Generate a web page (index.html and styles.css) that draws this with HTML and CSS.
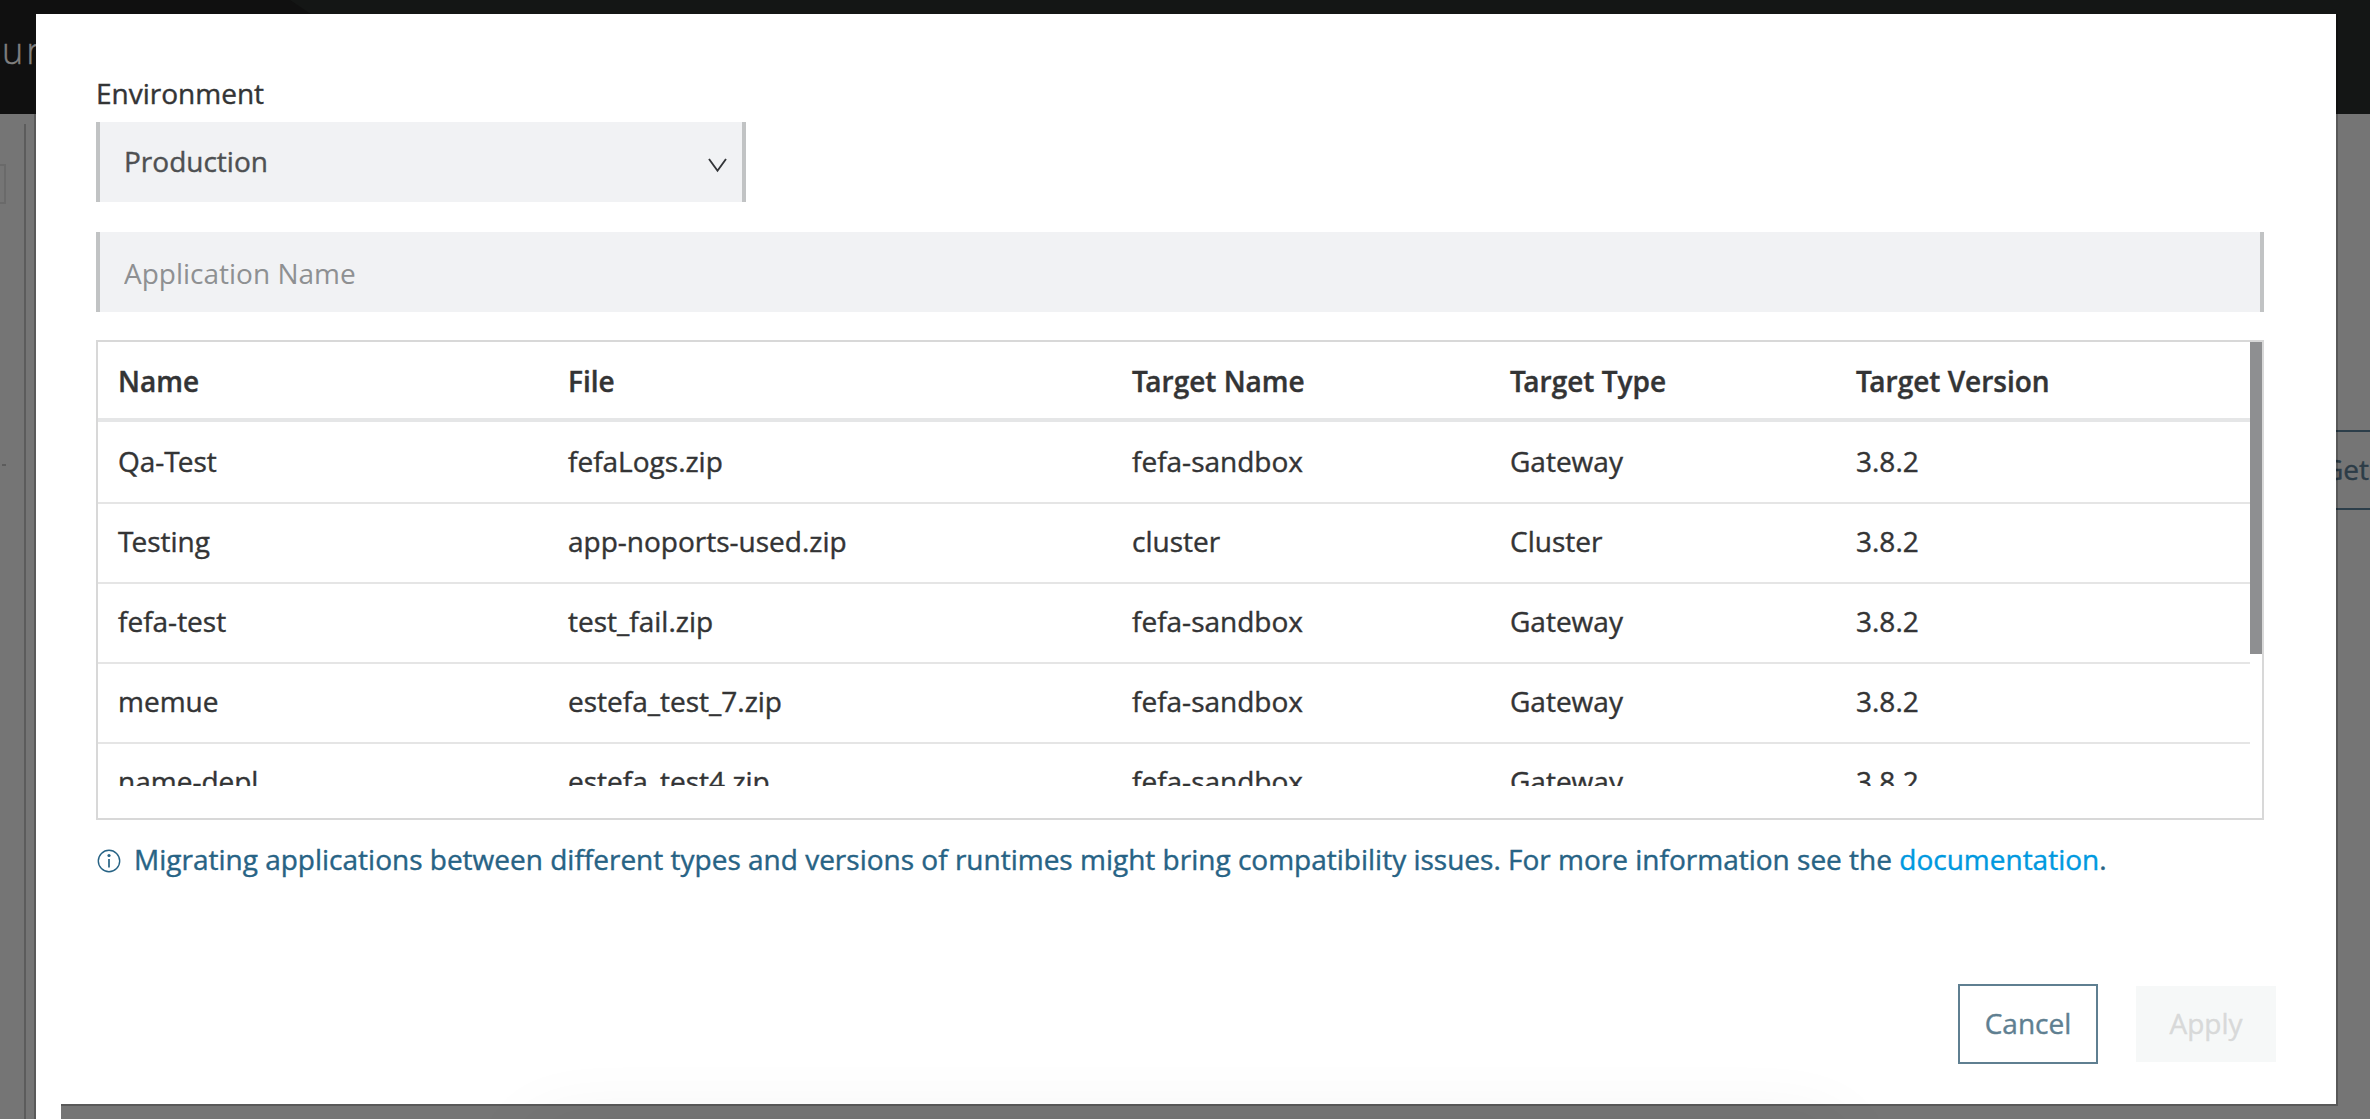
FILE: index.html
```html
<!DOCTYPE html>
<html lang="en">
<head>
<meta charset="utf-8">
<title>Runtime Manager</title>
<link rel="stylesheet" href="styles.css">
</head>
<body>
<div class="page">
  <header class="topbar">
    <svg class="topbar-shape" width="2080" height="114" viewBox="0 0 2080 114"><path d="M0 0H2080V114H170Z" fill="#141615"/></svg>
    <span class="topbar-title">ur</span>
  </header>
  <div class="page-line"></div>
  <div class="page-box"></div>
  <div class="page-dash"></div>
  <div class="page-button">Get</div>
</div>
<div class="under-panel"></div>
<main class="modal">
  <label class="label">Environment</label>
  <div class="field select">
    <span>Production</span>
    <svg width="20" height="16" viewBox="0 0 20 16"><path d="M2 2L10.500 13.700L19 2" fill="none" stroke="#333538" stroke-width="1.900"/></svg>
  </div>
  <input class="field input" type="text" placeholder="Application Name">
  <section class="table">
    <div class="rows">
      <div class="row head"><span>Name</span><span>File</span><span class="kern">Target Name</span><span class="kern">Target Type</span><span class="kern">Target Version</span></div>
      <div class="row first"><span>Qa-<b class="pair">T</b>est</span><span>fefaLogs.zip</span><span>fefa-sandbox</span><span>Gateway</span><span>3.8.2</span></div>
      <div class="row"><span><b class="pair">T</b>esting</span><span>app-noports-used.zip</span><span>cluster</span><span>Cluster</span><span>3.8.2</span></div>
      <div class="row"><span>fefa-test</span><span>test_fail.zip</span><span>fefa-sandbox</span><span>Gateway</span><span>3.8.2</span></div>
      <div class="row"><span>memue</span><span>estefa_test_7.zip</span><span>fefa-sandbox</span><span>Gateway</span><span>3.8.2</span></div>
      <div class="row"><span>name-depl</span><span>estefa_test4.zip</span><span>fefa-sandbox</span><span>Gateway</span><span>3.8.2</span></div>
    </div>
    <div class="scrollbar"></div>
  </section>
  <p class="info">
    <svg width="24" height="24" viewBox="0 0 24 24"><circle cx="12" cy="12" r="10.700" fill="none" stroke="#276385" stroke-width="1.400"/><circle cx="12" cy="6.500" r="1.600" fill="#276385"/><path d="M12 10V18.500" stroke="#276385" stroke-width="1.700"/></svg>
    <span>Migrating applications between different types and versions of runtimes might bring compatibility issues. For more information see the <a>documentation</a>.</span>
  </p>
  <footer class="actions">
    <button class="btn cancel">Cancel</button>
    <button class="btn apply" disabled>Apply</button>
  </footer>
</main>
<div class="dock"><div class="dock-shadow"></div></div>
</body>
</html>
```

FILE: styles.css
```css
* { box-sizing: border-box; }
body {
  margin: 0;
  width: 2370px;
  height: 1119px;
  position: relative;
  overflow: hidden;
  background: #757575;
  font: 28px/38px "Open Sans", sans-serif;
  color: #333435;
  -webkit-text-stroke-width: .4px;
}

/* Dimmed page behind the dialog */
.page { position: absolute; inset: 0; }
.topbar { position: relative; height: 114px; background: #101010; overflow: hidden; }
.topbar-shape { position: absolute; left: 290px; top: 0; }
.topbar-title {
  position: absolute; left: 2px; top: 26px;
  font-size: 36px; line-height: 49px; font-weight: 300;
  letter-spacing: 3px; color: #808080;
}
.page-line { position: absolute; left: 24px; top: 124px; bottom: 0; width: 2px; background: #5c5c5c; }
.page-box { position: absolute; left: 0; top: 164px; width: 6px; height: 40px; border: solid #6a6a6a; border-width: 2px 2px 2px 0; }
.page-dash { position: absolute; left: 2px; top: 464px; width: 4px; height: 2px; background: #5c5c5c; }
.page-button {
  position: absolute; left: 2300px; top: 430px; width: 70px; height: 80px;
  padding: 18px 0 0 21px; border: solid #2c3e4a; border-width: 2px 0 2px 2px; color: #2c3c47;
}

/* Sheet under the dialog; only its left edge shows below */
.under-panel { position: absolute; left: 34px; top: 114px; bottom: 0; width: 27px; background: #fff; border-left: 2px solid #595959; }

.modal {
  position: absolute; left: 36px; top: 14px; width: 2300px; height: 1090px;
  padding: 60px 72px 0 60px;
  display: flex; flex-direction: column;
  background: #fff;
}
.modal::after {
  content: ""; position: absolute; left: 25px; top: 0; right: -2px; bottom: -2px;
  border: solid rgba(0, 0, 0, .24); border-width: 0 2px 2px 0;
  pointer-events: none;
}
.label { height: 48px; line-height: 38px; }
.field {
  height: 80px; padding: 0 24px;
  border: solid #c1c3c4; border-width: 0 4px; border-radius: 0;
  background: #f1f2f4; font: inherit;
}
.select {
  width: 650px; display: flex; align-items: center; justify-content: space-between;
  color: #4e5052; padding: 0 15px 0 24px;
}
.select span { margin-bottom: 2px; }
.select svg { margin-top: 5px; }
.input { margin-top: 30px; width: 2168px; outline: 0; padding-top: 2px; -webkit-text-stroke-width: 0; }
.input::placeholder { color: #8e9092; opacity: 1; }

.table {
  margin-top: 28px; width: 2168px; height: 480px;
  border: 2px solid #d8d8d8; display: flex;
}
.rows { width: 2152px; height: 444px; overflow: hidden; }
.row {
  display: grid; grid-template-columns: 450px 564px 378px 346px 1fr;
  height: 80px; padding-top: 18px; border-bottom: 2px solid #e5e5e5;
}
.row span { padding-left: 20px; }
.head { font-weight: 600; border-bottom: 4px solid #e5e6e7; padding-top: 20px; }
.kern::first-letter { letter-spacing: -2.5px; }
.pair { font-weight: inherit; letter-spacing: -2px; }
.first { height: 82px; padding-top: 20px; }
.scrollbar { width: 12px; height: 312px; background: #8e8f91; }

.info { margin: 19px 0 0; display: flex; align-items: center; gap: 13px; padding-left: 1px; color: #276385; height: 40px; white-space: nowrap; }
.info svg { margin-top: 3px; }
.info a { color: #0099df; }

.actions { margin-top: 105px; margin-right: -12px; display: flex; justify-content: flex-end; align-items: center; gap: 38px; }
.btn { width: 140px; font: inherit; padding: 0 0 2px; border: 0; -webkit-text-stroke-width: .4px; }
.cancel { height: 80px; background: #fff; border: 2px solid #5f7f91; color: #5f7f91; }
.apply { height: 76px; background: #f6f8f8; color: #d8d9d9; }

/* Soft shadow cast by a panel below the visible area */
.dock { position: absolute; inset: 0; overflow: hidden; pointer-events: none; display: flex; align-items: flex-end; justify-content: center; }
.dock-shadow {
  width: 1200px; height: 1px; margin-bottom: -12px;
  box-shadow: 0 50px 80px 50px rgba(0, 0, 0, .075);
}
```
